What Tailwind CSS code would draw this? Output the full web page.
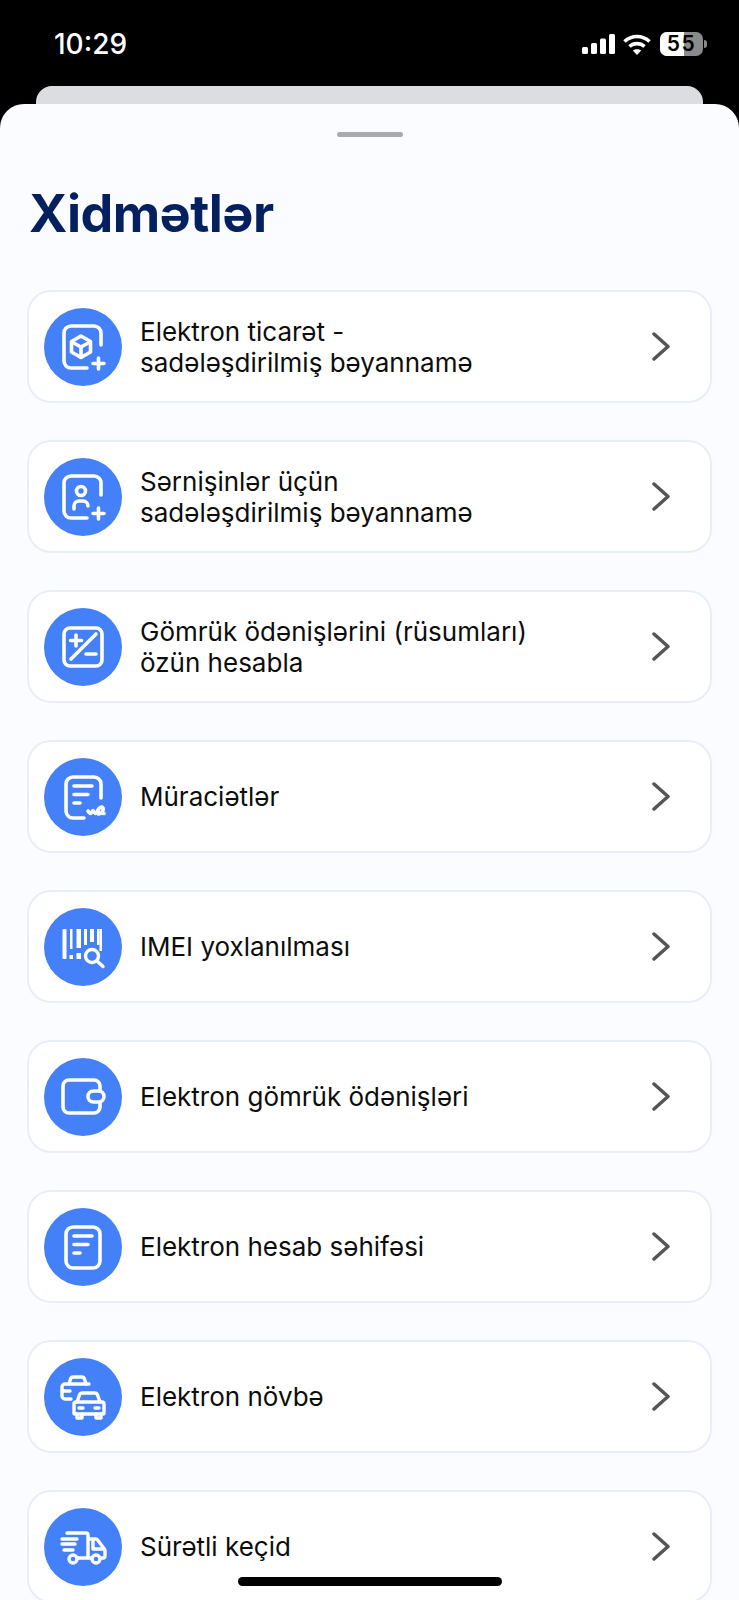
<!DOCTYPE html>
<html lang="az">
<head>
  <meta charset="UTF-8">
  <meta name="viewport" content="width=device-width, initial-scale=1.0">
  <title>Xidmətlər</title>
  <script src="https://cdn.jsdelivr.net/npm/@tailwindcss/browser@4"></script>
</head>
<body class="bg-black font-['Inter',sans-serif] overflow-hidden">
<div class="relative h-[1600px] w-[739px] overflow-hidden">
  <!-- status bar -->
  <div class="h-[86px] flex items-start justify-between pt-[28px] pl-[54px] pr-[32px] text-white">
    <span class="text-[28px] leading-[33px] font-medium">10:29</span>
    <div class="flex items-center gap-[8px] mt-[4px] h-[24px]">
      <svg width="33" height="20" viewBox="0 0 33 20" fill="#fff"><rect x="0" y="13" width="6" height="7" rx="1.5"/><rect x="9" y="9" width="6" height="11" rx="1.5"/><rect x="18" y="4.500" width="6" height="15.500" rx="1.500"/><rect x="27" y="0" width="6" height="20" rx="1.500"/></svg>
      <svg width="28" height="21" viewBox="0 0 28 21" fill="none" stroke="#fff" stroke-width="3.600"><path d="M1.500 7.500C8.500 .8 19.500 .8 26.500 7.500"/><path d="M6.500 12.500c4.300-3.900 10.700-3.900 15 0"/><path d="M14 21l-4.200-4.500c2.400-1.800 6-1.800 8.400 0z" fill="#fff" stroke="none"/></svg>
      <div class="relative flex ml-[1px] items-center">
        <div class="relative w-[43px] h-[24px] rounded-[7px] overflow-hidden bg-[#8a8a8a] flex items-center justify-center">
          <div class="absolute left-0 top-0 h-full w-[24px] bg-white"></div>
          <span class="relative text-[21px] leading-[24px] font-semibold text-black tracking-[1.500px]">55</span>
        </div>
        <div class="w-[3px] h-[8px] rounded-r-full bg-[#8a8a8a] ml-[1px]"></div>
      </div>
    </div>
  </div>

  <!-- sheet behind -->
  <div class="mx-[36px] h-[18px] rounded-t-[16px] bg-[#dcdde0]"></div>

  <!-- sheet -->
  <div class="h-[1496px] rounded-t-[24px] bg-[#fafcff] px-[27px] pt-[28px]">
    <div class="mx-auto w-[66px] h-[5px] rounded-full bg-[#a9abad]"></div>
    <h1 class="mt-[47px] ml-[2px] text-[52px] leading-[60px] font-bold text-[#04205f] tracking-[-0.5px]">Xidmətlər</h1>
    <div class="mt-[46px] flex flex-col gap-[37px]">

      <div class="h-[113px] shrink-0 rounded-[24px] bg-white border-2 border-[#e8eef8] flex items-center pl-[15px] pr-[40px]">
        <div class="size-[78px] shrink-0 rounded-full bg-[#4480f7]">
          <svg width="78" height="78" viewBox="0 0 78 78" fill="none" stroke="#fff" stroke-width="3.600" stroke-linecap="round" stroke-linejoin="round">
            <path d="M57 37V25a7 7 0 0 0-7-7H27a7 7 0 0 0-7 7v28a7 7 0 0 0 7 7h16"/>
            <path d="M37 28l9.500 5.500v10.500l-9.500 5.500-9.500-5.500V33.500z"/><path d="M28 34l9 5 9-5M37 39v10"/>
            <path d="M54.500 50v11M49 55.500h11"/>
          </svg>
        </div>
        <p class="ml-[18px] flex-1 text-[26px] leading-[31px] text-[#0d0d0d]">Elektron ticarət -<br>sadələşdirilmiş bəyannamə</p>
        <svg width="18" height="29" viewBox="0 0 18 29" fill="none" stroke="#555" stroke-width="3.500" stroke-linecap="round" stroke-linejoin="round"><path d="M2 2l14 12.500L2 27"/></svg>
      </div>

      <div class="h-[113px] shrink-0 rounded-[24px] bg-white border-2 border-[#e8eef8] flex items-center pl-[15px] pr-[40px]">
        <div class="size-[78px] shrink-0 rounded-full bg-[#4480f7]">
          <svg width="78" height="78" viewBox="0 0 78 78" fill="none" stroke="#fff" stroke-width="3.600" stroke-linecap="round" stroke-linejoin="round">
            <path d="M57 37V25a7 7 0 0 0-7-7H27a7 7 0 0 0-7 7v28a7 7 0 0 0 7 7h16"/>
            <circle cx="37" cy="33" r="4.500"/><path d="M30 51v-3a5 5 0 0 1 5-5h4a5 5 0 0 1 5 5"/>
            <path d="M54.500 50v11M49 55.500h11"/>
          </svg>
        </div>
        <p class="ml-[18px] flex-1 text-[26px] leading-[31px] text-[#0d0d0d]">Sərnişinlər üçün<br>sadələşdirilmiş bəyannamə</p>
        <svg width="18" height="29" viewBox="0 0 18 29" fill="none" stroke="#555" stroke-width="3.500" stroke-linecap="round" stroke-linejoin="round"><path d="M2 2l14 12.500L2 27"/></svg>
      </div>

      <div class="h-[113px] shrink-0 rounded-[24px] bg-white border-2 border-[#e8eef8] flex items-center pl-[15px] pr-[40px]">
        <div class="size-[78px] shrink-0 rounded-full bg-[#4480f7]">
          <svg width="78" height="78" viewBox="0 0 78 78" fill="none" stroke="#fff" stroke-width="3.600" stroke-linecap="round" stroke-linejoin="round">
            <rect x="20" y="20" width="38" height="38" rx="6"/>
            <path d="M52 26L27 51"/><path d="M32 27v11M26.500 32.500h11"/><path d="M42 46h10"/>
          </svg>
        </div>
        <p class="ml-[18px] flex-1 text-[26px] leading-[31px] text-[#0d0d0d]">Gömrük ödənişlərini (rüsumları)<br>özün hesabla</p>
        <svg width="18" height="29" viewBox="0 0 18 29" fill="none" stroke="#555" stroke-width="3.500" stroke-linecap="round" stroke-linejoin="round"><path d="M2 2l14 12.500L2 27"/></svg>
      </div>

      <div class="h-[113px] shrink-0 rounded-[24px] bg-white border-2 border-[#e8eef8] flex items-center pl-[15px] pr-[40px]">
        <div class="size-[78px] shrink-0 rounded-full bg-[#4480f7]">
          <svg width="78" height="78" viewBox="0 0 78 78" fill="none" stroke="#fff" stroke-width="3.600" stroke-linecap="round" stroke-linejoin="round">
            <path d="M57 40V26a7 7 0 0 0-7-7H29a7 7 0 0 0-7 7v27a7 7 0 0 0 7 7h11"/>
            <path d="M30 28h18M30 36.500h14M30 45h6"/>
            <path d="M44 53c1.500 3 3 3 4 1s1-2 2 0 2 2 3 0c2-5 5-6 6-4s-2 6-4 6 0-2 5-.5"/>
          </svg>
        </div>
        <p class="ml-[18px] flex-1 text-[26px] leading-[31px] text-[#0d0d0d]">Müraciətlər</p>
        <svg width="18" height="29" viewBox="0 0 18 29" fill="none" stroke="#555" stroke-width="3.500" stroke-linecap="round" stroke-linejoin="round"><path d="M2 2l14 12.500L2 27"/></svg>
      </div>

      <div class="h-[113px] shrink-0 rounded-[24px] bg-white border-2 border-[#e8eef8] flex items-center pl-[15px] pr-[40px]">
        <div class="size-[78px] shrink-0 rounded-full bg-[#4480f7]">
          <svg width="78" height="78" viewBox="0 0 78 78" fill="#fff">
            <rect x="18.500" y="21" width="4" height="30" rx="1"/>
            <rect x="26" y="21" width="2.500" height="20"/><rect x="25.500" y="47" width="3.500" height="4"/>
            <rect x="32.500" y="21" width="4.500" height="19"/><rect x="32.500" y="45" width="4.500" height="6"/>
            <rect x="40" y="21" width="3" height="16"/><rect x="46" y="21" width="4" height="13"/>
            <rect x="53" y="21" width="2.500" height="16"/><rect x="55.500" y="21" width="2.500" height="22"/>
            <g fill="none" stroke="#fff" stroke-width="3.400" stroke-linecap="round"><circle cx="48" cy="48" r="6.500"/><path d="M53 53l6 5.500"/></g>
          </svg>
        </div>
        <p class="ml-[18px] flex-1 text-[26px] leading-[31px] text-[#0d0d0d]">IMEI yoxlanılması</p>
        <svg width="18" height="29" viewBox="0 0 18 29" fill="none" stroke="#555" stroke-width="3.500" stroke-linecap="round" stroke-linejoin="round"><path d="M2 2l14 12.500L2 27"/></svg>
      </div>

      <div class="h-[113px] shrink-0 rounded-[24px] bg-white border-2 border-[#e8eef8] flex items-center pl-[15px] pr-[40px]">
        <div class="size-[78px] shrink-0 rounded-full bg-[#4480f7]">
          <svg width="78" height="78" viewBox="0 0 78 78" fill="none" stroke="#fff" stroke-width="3.600" stroke-linecap="round" stroke-linejoin="round">
            <path d="M56 33v-5a6 6 0 0 0-6-6H25a6 6 0 0 0-6 6v21a6 6 0 0 0 6 6h25a6 6 0 0 0 6-6v-4"/>
            <rect x="44" y="33" width="16" height="11" rx="5.500"/>
          </svg>
        </div>
        <p class="ml-[18px] flex-1 text-[26px] leading-[31px] text-[#0d0d0d]">Elektron gömrük ödənişləri</p>
        <svg width="18" height="29" viewBox="0 0 18 29" fill="none" stroke="#555" stroke-width="3.500" stroke-linecap="round" stroke-linejoin="round"><path d="M2 2l14 12.500L2 27"/></svg>
      </div>

      <div class="h-[113px] shrink-0 rounded-[24px] bg-white border-2 border-[#e8eef8] flex items-center pl-[15px] pr-[40px]">
        <div class="size-[78px] shrink-0 rounded-full bg-[#4480f7]">
          <svg width="78" height="78" viewBox="0 0 78 78" fill="none" stroke="#fff" stroke-width="3.600" stroke-linecap="round" stroke-linejoin="round">
            <rect x="22" y="19" width="34" height="41" rx="7"/>
            <path d="M30 28h18M30 36.500h14M30 45h6"/>
          </svg>
        </div>
        <p class="ml-[18px] flex-1 text-[26px] leading-[31px] text-[#0d0d0d]">Elektron hesab səhifəsi</p>
        <svg width="18" height="29" viewBox="0 0 18 29" fill="none" stroke="#555" stroke-width="3.500" stroke-linecap="round" stroke-linejoin="round"><path d="M2 2l14 12.500L2 27"/></svg>
      </div>

      <div class="h-[113px] shrink-0 rounded-[24px] bg-white border-2 border-[#e8eef8] flex items-center pl-[15px] pr-[40px]">
        <div class="size-[78px] shrink-0 rounded-full bg-[#4480f7]">
          <svg width="78" height="78" viewBox="0 0 78 78" fill="none" stroke="#fff" stroke-width="3.400" stroke-linecap="round" stroke-linejoin="round">
            <path d="M25 26l1.500-5a3 3 0 0 1 3-2h8a3 3 0 0 1 3 2l1.500 5h-17z"/><path d="M25 26h-4a3 3 0 0 0-3 3v9a3 3 0 0 0 3 3h6"/><path d="M42 26h3"/><path d="M18 33h8"/>
            <path d="M33 44l2.500-7a3 3 0 0 1 3-2h12a3 3 0 0 1 3 2l2.500 7"/>
            <path d="M32 44h26a2 2 0 0 1 2 2v9a1 1 0 0 1-1 1H31a1 1 0 0 1-1-1v-9a2 2 0 0 1 2-2z"/>
            <path d="M33 56v4h5v-4M52 56v4h5v-4M35 50h4M51 50h4"/>
          </svg>
        </div>
        <p class="ml-[18px] flex-1 text-[26px] leading-[31px] text-[#0d0d0d]">Elektron növbə</p>
        <svg width="18" height="29" viewBox="0 0 18 29" fill="none" stroke="#555" stroke-width="3.500" stroke-linecap="round" stroke-linejoin="round"><path d="M2 2l14 12.500L2 27"/></svg>
      </div>

      <div class="h-[113px] shrink-0 rounded-[24px] bg-white border-2 border-[#e8eef8] flex items-center pl-[15px] pr-[40px]">
        <div class="size-[78px] shrink-0 rounded-full bg-[#4480f7]">
          <svg width="78" height="78" viewBox="0 0 78 78" fill="none" stroke="#fff" stroke-width="3.400" stroke-linecap="round" stroke-linejoin="round">
            <path d="M23 25h19a2 2 0 0 1 2 2v23H34M44 31h7a3 3 0 0 1 3 1.500l6 8a3 3 0 0 1 1 2V48a2 2 0 0 1-2 2h-2M44 50h3"/>
            <path d="M49 33v8h10"/>
            <path d="M18 31h15M18 36h13M20 42h9"/>
            <circle cx="29" cy="51" r="4"/><circle cx="52" cy="51" r="4"/>
          </svg>
        </div>
        <p class="ml-[18px] flex-1 text-[26px] leading-[31px] text-[#0d0d0d]">Sürətli keçid</p>
        <svg width="18" height="29" viewBox="0 0 18 29" fill="none" stroke="#555" stroke-width="3.500" stroke-linecap="round" stroke-linejoin="round"><path d="M2 2l14 12.500L2 27"/></svg>
      </div>

    </div>
  </div>

  <!-- home indicator -->
  <div class="absolute left-[238px] top-[1577px] w-[264px] h-[9px] rounded-full bg-black"></div>
</div>
</body>
</html>
